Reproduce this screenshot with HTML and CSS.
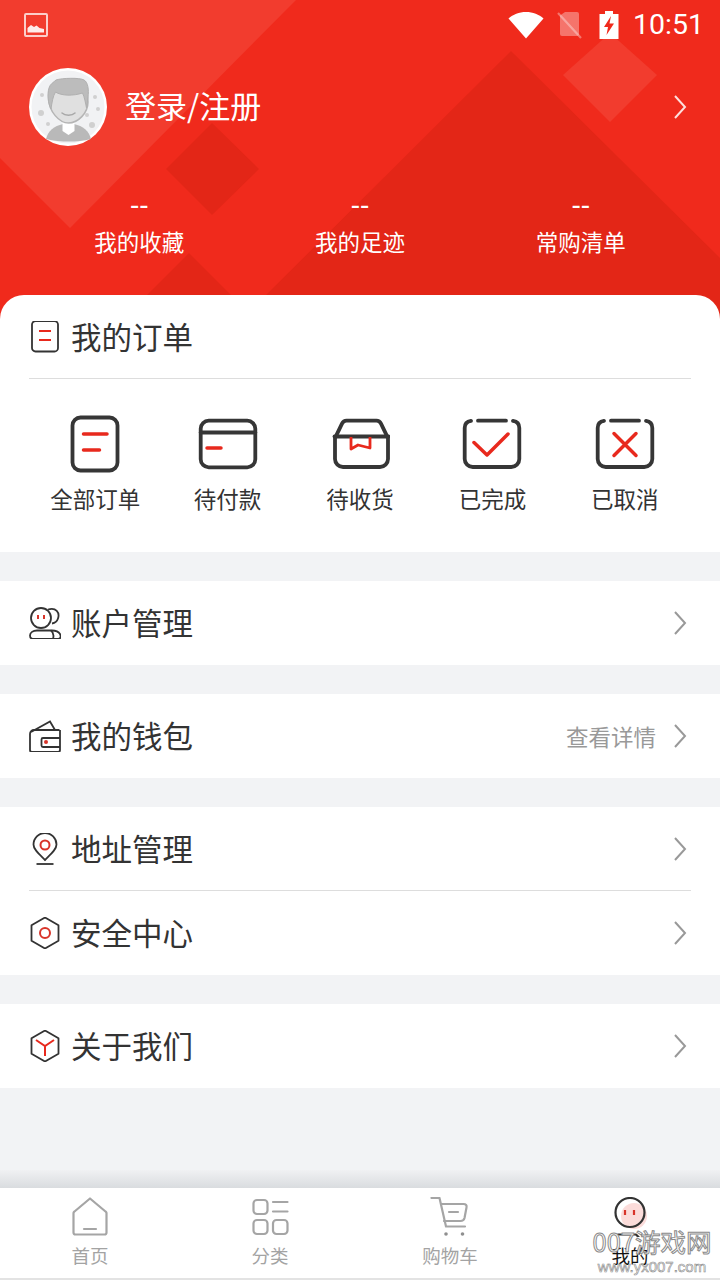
FILE: index.html
```html
<!DOCTYPE html>
<html>
<head>
  <title>我的</title>
  <meta charset="utf-8">
  <meta name="viewport" content="width=device-width, initial-scale=1">
  <link rel="stylesheet" href="styles.css">
</head>
<body>
  <div id="wrapper">

    <!-- red header -->
    <div class="header">
      <svg class="header-bg" viewBox="0 0 720 319" width="720" height="319">
        <polygon points="0,0 296,0 70,228 0,158" fill="#f23c2e"/>
        <polygon points="610,33 657,75 610,122 563,75" fill="#f23c2e"/>
        <polygon points="511,51 720,258 720,319 242,319" fill="#e32617"/>
        <polygon points="212,123 259,169 212,215 166,169" fill="#e32617"/>
        <polygon points="189,253 255,319 123,319" fill="#e32617"/>
      </svg>

      <div class="status-bar">
        <svg class="status-pic" viewBox="0 0 24 24" width="24" height="24">
          <rect x="1" y="1" width="22" height="22" rx="1" fill="none" stroke="#fff" stroke-opacity=".75" stroke-width="2"/>
          <path d="M3.500 19.500V15l3.500-3 3 2 2.500-1.500 3 2.500 4.500 1v3.500z" fill="#fff" fill-opacity=".9"/>
        </svg>
        <div class="status-right">
          <svg viewBox="0 0 36 28" width="36" height="28"><path d="M18 27.500L.5 7.500C5 3.500 11 1 18 1s13 2.500 17.500 6.500z" fill="#fff"/></svg>
          <svg class="status-sim" viewBox="0 0 26 28" width="26" height="28">
            <path d="M3 4.500V23a2 2 0 0 0 2 2h15a2 2 0 0 0 2-2V3a2 2 0 0 0-2-2H8z" fill="#fff" fill-opacity=".35"/>
            <path d="M1 2l23 25" stroke="#fff" stroke-opacity=".35" stroke-width="2.200"/>
          </svg>
          <svg viewBox="0 0 20 28" width="20" height="28">
            <path d="M6 0h8v3h5.500v25H.5V3H6z" fill="#fff"/>
            <path d="M12 5L5 16h4l-1.500 8L15 12.500h-4.500z" fill="#f0291b"/>
          </svg>
          <span class="status-time">10:51</span>
        </div>
      </div>

      <div class="user-row">
        <svg class="avatar" viewBox="0 0 78 78" width="78" height="78">
          <circle cx="39" cy="39" r="39" fill="#fff"/>
          <circle cx="39" cy="39" r="36.500" fill="#f1f2f4"/>
          <g fill="#d0d0d0">
            <circle cx="13" cy="27" r="2"/><circle cx="12" cy="45" r="3"/><circle cx="19" cy="56" r="2"/>
            <circle cx="66" cy="29" r="2"/><circle cx="69" cy="41" r="2"/><circle cx="58" cy="47" r="2"/><circle cx="63" cy="57" r="3"/>
          </g>
          <path d="M17 71c2-8 8-13 17-15h11c9 2 15 7 17 15-7 2-15 2.500-22 2.500S24 73 17 71z" fill="#b9b9b9"/>
          <path d="M33.500 50h12v13l-6 4-6-4z" fill="#fff"/>
          <path d="M20 24c0-4 3-6 6-6h27c3 2 6 9 6 16 0 11-10 21-19.500 21S20 43 20 32z" fill="#e0e0e0" stroke="#b5b5b5" stroke-width="1.500"/>
          <path d="M22 41c-3-6-4-14-2-21 1-4 5-6 7-8 6-2 24-2.500 28 0 4 2 5 10 4 17l-1.500 11c-1-5-2-11-4-15-9 3-21 3-27-1-2.500 4-3.500 10-4.500 17z" fill="#bcbcbc" stroke="#b0b0b0" stroke-width="1"/>
          <path d="M33 45c3 3 10 3 13 0" fill="none" stroke="#a8a8a8" stroke-width="1.500" stroke-linecap="round"/>
        </svg>
        <span class="user-name">登录/注册</span>
        <svg class="chevron" viewBox="0 0 14 24" width="14" height="24"><path d="M2 1l10 11L2 23" fill="none" stroke="#fff" stroke-opacity=".85" stroke-width="2"/></svg>
      </div>

      <div class="stats">
        <div class="stat"><span class="stat-num">--</span><span>我的收藏</span></div>
        <div class="stat"><span class="stat-num">--</span><span>我的足迹</span></div>
        <div class="stat"><span class="stat-num">--</span><span>常购清单</span></div>
      </div>
    </div>
    <!-- end of header -->

    <div class="content">

      <div class="card orders">
        <div class="row row-line">
          <svg class="row-icon" viewBox="0 0 32 32" width="32" height="32">
            <rect x="3" y="0" width="26" height="30.500" rx="3.500" fill="none" stroke="#333" stroke-width="1.800"/>
            <path d="M10 10h12M10 19h12" stroke="#e8291d" stroke-width="2"/>
          </svg>
          <span class="row-title">我的订单</span>
        </div>
        <ul class="order-list">
          <li>
            <svg viewBox="0 0 60 60" width="60" height="60" class="order-icon">
              <rect x="7.500" y="3.500" width="45" height="53" rx="8"/>
              <path class="red" d="M18.500 20h23.500M18.500 36h16"/>
            </svg>
            全部订单
          </li>
          <li>
            <svg viewBox="0 0 60 60" width="60" height="60" class="order-icon">
              <rect x="2.700" y="6.700" width="54.600" height="46.600" rx="8"/>
              <path d="M2.700 18.500h54.600"/>
              <path class="red" d="M9 34h14"/>
            </svg>
            待付款
          </li>
          <li>
            <svg viewBox="-1.500 0 60 60" width="60" height="60" class="order-icon">
              <path d="M15 6.700h30c2 0 3.500 1 4.500 3l7 14.500V45a8 8 0 0 1-8 8h-37a8 8 0 0 1-8-8V24.200l7-14.500c1-2 2.500-3 4.500-3z"/>
              <path d="M3 22.500h54"/>
              <path class="red thin" d="M19.500 23v12l7-4 12 3V23"/>
            </svg>
            待收货
          </li>
          <li>
            <svg viewBox="0 0 60 60" width="60" height="60" class="order-icon">
              <path d="M16 6.700h28M9 6.900c-4 .6-6.300 3-6.300 7V45a8 8 0 0 0 8 8h38.600a8 8 0 0 0 8-8V13.900c0-4-2.300-6.400-6.300-7"/>
              <path class="red" d="M12 28.500l13 12.500 21-21"/>
            </svg>
            已完成
          </li>
          <li>
            <svg viewBox="0 0 60 60" width="60" height="60" class="order-icon">
              <path d="M16 6.700h28M9 6.900c-4 .6-6.300 3-6.300 7V45a8 8 0 0 0 8 8h38.600a8 8 0 0 0 8-8V13.900c0-4-2.300-6.400-6.300-7"/>
              <path class="red" d="M19 19.500l22 22M41 19.500l-22 22"/>
            </svg>
            已取消
          </li>
        </ul>
      </div>

      <div class="card">
        <div class="row">
          <svg class="row-icon" viewBox="0 0 32 32" width="32" height="32">
            <g fill="none" stroke="#333" stroke-width="1.800">
              <circle cx="12" cy="11" r="10"/>
              <path d="M19 2.500c8-2.500 12 3 10 9-.8 2.500-3 4.500-6 5"/>
              <path d="M5 32h24c3 0 3-3 2-5-1.500-2.500-5-3.500-8-3.500H8c-4 0-7 2-7 5 0 2 1.500 3.500 4 3.500z"/>
              <path d="M22 23.500c2.500 2 3 5 2 8.500"/>
            </g>
            <path d="M9 8v4M15 8v4" stroke="#d8342a" stroke-width="2"/>
          </svg>
          <span class="row-title">账户管理</span>
          <svg class="chevron" viewBox="0 0 14 24" width="14" height="24"><path d="M2 1l10 11L2 23" fill="none" stroke="#999" stroke-width="2"/></svg>
        </div>
      </div>

      <div class="card">
        <div class="row">
          <svg class="row-icon" viewBox="0 0 32 32" width="32" height="32">
            <g fill="none" stroke="#333" stroke-width="1.800">
              <path d="M30.500 10H5a4 4 0 0 0-4 4v16a2 2 0 0 0 2 2h26a2 2 0 0 0 2-2V10"/>
              <path d="M2 12L21 1.500 26 10"/>
              <path d="M31 18H14a1.500 1.500 0 0 0-1.500 1.500v6A1.500 1.500 0 0 0 14 27h17"/>
            </g>
            <circle cx="17" cy="22" r="2" fill="#d8342a"/>
          </svg>
          <span class="row-title">我的钱包</span>
          <span class="row-more">查看详情</span>
          <svg class="chevron" viewBox="0 0 14 24" width="14" height="24"><path d="M2 1l10 11L2 23" fill="none" stroke="#999" stroke-width="2"/></svg>
        </div>
      </div>

      <div class="card">
        <div class="row row-line">
          <svg class="row-icon" viewBox="0 0 32 32" width="32" height="32">
            <path d="M16 27C10 21 4.500 16.500 4.500 11.500a11.500 11.500 0 0 1 23 0C27.500 16.500 22 21 16 27z" fill="none" stroke="#333" stroke-width="1.800"/>
            <circle cx="16" cy="12" r="4.500" fill="none" stroke="#d8342a" stroke-width="2"/>
            <path d="M7.500 31h17" stroke="#333" stroke-width="1.800"/>
          </svg>
          <span class="row-title">地址管理</span>
          <svg class="chevron" viewBox="0 0 14 24" width="14" height="24"><path d="M2 1l10 11L2 23" fill="none" stroke="#999" stroke-width="2"/></svg>
        </div>
        <div class="row">
          <svg class="row-icon" viewBox="0 0 32 32" width="32" height="32">
            <path d="M16 .5l13.500 7.700v15.600L16 31.500 2.500 23.800V8.200z" fill="none" stroke="#333" stroke-width="1.800" stroke-linejoin="round"/>
            <circle cx="16" cy="16" r="5" fill="none" stroke="#d8342a" stroke-width="2"/>
          </svg>
          <span class="row-title">安全中心</span>
          <svg class="chevron" viewBox="0 0 14 24" width="14" height="24"><path d="M2 1l10 11L2 23" fill="none" stroke="#999" stroke-width="2"/></svg>
        </div>
      </div>

      <div class="card">
        <div class="row">
          <svg class="row-icon" viewBox="0 0 32 32" width="32" height="32">
            <path d="M16 .5l13.500 7.700v15.600L16 31.500 2.500 23.800V8.200z" fill="none" stroke="#333" stroke-width="1.800" stroke-linejoin="round"/>
            <path d="M7 10l9 6 9-6M16 16v10" fill="none" stroke="#e8291d" stroke-width="2"/>
          </svg>
          <span class="row-title">关于我们</span>
          <svg class="chevron" viewBox="0 0 14 24" width="14" height="24"><path d="M2 1l10 11L2 23" fill="none" stroke="#999" stroke-width="2"/></svg>
        </div>
      </div>
    </div>

    <div class="nav-shadow"></div>

    <!-- bottom tabs -->
    <div class="nav">
      <div class="tab">
        <svg viewBox="0 0 40 40" width="40" height="40" class="tab-icon">
          <path d="M20 1.500L35.500 14.500a2 2 0 0 1 1 1.500v19.500a2 2 0 0 1-2 2h-29a2 2 0 0 1-2-2V16a2 2 0 0 1 1-1.500z" />
          <path d="M14 32h12"/>
        </svg>
        <span>首页</span>
      </div>
      <div class="tab">
        <svg viewBox="0 0 40 40" width="40" height="40" class="tab-icon">
          <rect x="3.500" y="3" width="14" height="14" rx="3.500"/>
          <path d="M23 5h14.500M23 14.500h14.500"/>
          <rect x="3.500" y="23" width="14" height="14" rx="3.500"/>
          <rect x="23" y="23" width="14.500" height="14" rx="3.500"/>
        </svg>
        <span>分类</span>
      </div>
      <div class="tab">
        <svg viewBox="0 0 40 40" width="40" height="40" class="tab-icon">
          <path d="M1.500 1h8l6.500 28.500h19"/>
          <path d="M11 7h22.500c2.500 0 3.500 1.500 3 3.500L34.500 21c-.5 2-2 3-4 3H14"/>
          <path d="M19 15h9"/>
          <circle class="dot" cx="16" cy="37" r="1.800"/>
          <circle class="dot" cx="32.500" cy="37" r="1.800"/>
        </svg>
        <span>购物车</span>
      </div>
      <div class="tab tab-on">
        <svg viewBox="0 0 40 40" width="40" height="40" class="tab-icon">
          <circle class="blush" cx="24" cy="19" r="13"/>
          <circle class="ring" cx="20" cy="15.500" r="14.500"/>
          <path class="eye" d="M15 13v5M24 13v5"/>
          <path class="ring" d="M8 37.500h18l3 3"/>
        </svg>
        <span>我的</span>
      </div>
      <div class="watermark">
        <span class="wm-big">007游戏网</span>
        <span class="wm-small">www.yx007.com</span>
      </div>
    </div>
  </div>
</body>
</html>
```

FILE: styles.css
```css
* {
  box-sizing: border-box;
}
body {
  margin: 0;
  font-family: "Noto Sans CJK SC", "Noto Sans", sans-serif;
  color: #333;
}
svg {
  display: block;
  flex: none;
}
#wrapper {
  display: flex;
  flex-direction: column;
  width: 720px;
  height: 1280px;
  overflow: hidden;
  background-color: #f2f3f5;
}

/* header */
.header {
  position: relative;
  height: 319px;
  margin-bottom: -24px;
  padding-bottom: 24px;
  background-color: #f02a1c;
  color: #fff;
  display: flex;
  flex-direction: column;
}
.header-bg {
  position: absolute;
  top: 0;
  left: 0;
}
.status-bar,
.user-row,
.stats {
  position: relative;
}
.status-bar {
  display: flex;
  justify-content: space-between;
  align-items: center;
  height: 50px;
  padding: 0 16px 0 24px;
}
.status-right {
  display: flex;
  align-items: center;
}
.status-sim {
  margin: 0 16px 0 13px;
}
.status-time {
  margin-left: 14px;
  font-family: Roboto, sans-serif;
  font-size: 28.500px;
  line-height: 50px;
}
.user-row {
  display: flex;
  align-items: center;
  height: 78px;
  margin-top: 18px;
  padding: 0 33px 0 29px;
}
.avatar {
  margin-right: 18px;
}
.user-name {
  flex: 1;
  margin-bottom: 4px;
  font-size: 31px;
  line-height: 40px;
}
.stats {
  display: flex;
  margin-top: 42px;
  padding: 0 29px;
}
.stat {
  flex: 1;
  display: flex;
  flex-direction: column;
  align-items: center;
  font-size: 22.500px;
  line-height: 34px;
}
.stat-num {
  height: 36px;
  font-size: 26px;
  font-weight: 500;
  line-height: 30px;
}

/* cards and rows */
.content {
  position: relative;
  flex: 1;
  display: flex;
  flex-direction: column;
  gap: 29px;
}
.card {
  background-color: #fff;
}
.orders {
  height: 257px;
  border-radius: 24px 24px 0 0;
}
.row {
  display: flex;
  align-items: center;
  height: 84px;
  margin: 0 29px;
}
.row-line {
  border-bottom: 1px solid #ddd;
}
.row-icon {
  margin-right: 10px;
}
.row-title {
  flex: 1;
  margin-bottom: 2px;
  font-size: 30.500px;
  line-height: 40px;
}
.row-more {
  margin-right: 17px;
  font-size: 22.500px;
  color: #999;
}
.row .chevron {
  margin-right: 4px;
}

/* order shortcuts */
.order-list {
  display: flex;
  margin: 0;
  padding: 35px 29px 0;
  list-style: none;
}
.order-list li {
  flex: 1;
  display: flex;
  flex-direction: column;
  align-items: center;
  font-size: 22.500px;
  line-height: 34px;
  color: #333;
}
.order-icon {
  margin-bottom: 7px;
  fill: none;
  stroke: #363636;
  stroke-width: 3.800;
  stroke-linecap: round;
  stroke-linejoin: round;
}
.order-icon .red {
  stroke: #e8291d;
  stroke-width: 3.500;
}
.order-icon .thin {
  stroke-width: 2.800;
  stroke-linecap: butt;
}

/* bottom tabs */
.nav-shadow {
  height: 18px;
  background: linear-gradient(#f0f1f3, #d9dcdf);
}
.nav {
  position: relative;
  display: flex;
  height: 92px;
  background-color: #fff;
  border-bottom: 2px solid #e3e3e3;
}
.tab {
  flex: 1;
  display: flex;
  flex-direction: column;
  align-items: center;
  padding-top: 9px;
  font-size: 18.500px;
  line-height: 26px;
  color: #a3a3a3;
}
.tab-icon {
  margin-bottom: 5px;
  fill: none;
  stroke: #a5a5a5;
  stroke-width: 2.200;
  stroke-linecap: round;
  stroke-linejoin: round;
}
.tab-icon .dot {
  fill: #8f8f8f;
  stroke: none;
}
.tab-on {
  color: #111;
}
.tab-icon .ring {
  stroke: #333;
}
.tab-icon .blush {
  fill: #fbdcda;
  stroke: none;
}
.tab-icon .eye {
  stroke: #d8342a;
  stroke-linecap: butt;
}

/* site watermark over the last tab */
.watermark {
  position: absolute;
  top: 38px;
  left: 590px;
  width: 124px;
  display: flex;
  flex-direction: column;
  align-items: center;
  color: #fff;
}
.wm-big {
  font-size: 25.500px;
  line-height: 30px;
  white-space: nowrap;
  -webkit-text-stroke: 1px #8a8a8a;
}
.wm-small {
  margin-top: 3px;
  font-family: "Liberation Sans", sans-serif;
  font-size: 15px;
  line-height: 16px;
  white-space: nowrap;
  -webkit-text-stroke: .6px #8a8a8a;
}
```
